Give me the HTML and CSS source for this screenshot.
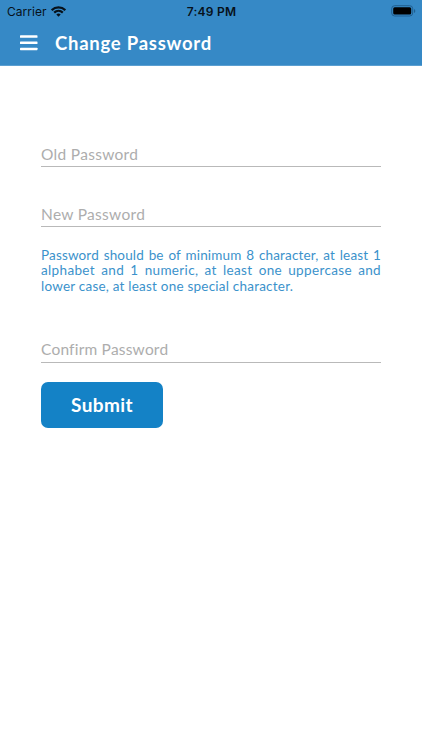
FILE: index.html
```
<!DOCTYPE html>
<html lang="en">
<head>
<meta charset="utf-8">
<title>Change Password</title>
<link rel="stylesheet" href="styles.css">
</head>
<body>
<header class="header">
  <div class="status">
    <div class="carrier"><span class="carrier-name">Carrier</span>
      <svg class="wifi" width="15" height="11" viewBox="0 0 15 11" fill="none" stroke="#07111a" stroke-width="2.200"><path d="M.7 4.1C4.5.4 10.500.4 14.300 4.100M3.200 6.600C5.700 4.200 9.300 4.200 11.800 6.600"/><path d="M5.300 8.400Q7.500 6.600 9.700 8.400L7.500 10.700Z" fill="#07111a" stroke="none"/></svg>
    </div>
    <time class="time">7:49 PM</time>
    <svg class="battery" width="25" height="12" viewBox="0 0 25 12"><rect x=".7" y=".7" width="21" height="10.300" rx="3" fill="none" stroke="#205f91"/><rect x="2.200" y="2.200" width="18" height="7.300" rx="1.500" fill="#000"/><path d="M23 4v4q1.300-.6 1.300-2T23 4" fill="#205f91"/></svg>
  </div>
  <div class="toolbar">
    <svg class="menu" width="18" height="16" viewBox="0 0 18 16" fill="#fff"><rect y=".3" width="17.500" height="2.500" rx=".6"/><rect y="6.500" width="17.500" height="2.500" rx=".6"/><rect y="12.700" width="17.500" height="2.500" rx=".6"/></svg>
    <h1 class="title">Change Password</h1>
  </div>
</header>
<main class="form">
  <div class="field old"><span>Old Password</span></div>
  <div class="field new"><span>New Password</span></div>
  <div class="hint">
    <p class="line">Password should be of minimum 8 character, at least 1</p>
    <p class="line wide">alphabet and 1 numeric, at least one uppercase and</p>
    <p class="line last"><span>lower case, at least one special character.</span></p>
  </div>
  <div class="field confirm"><span>Confirm Password</span></div>
  <button class="submit">Submit</button>
</main>
</body>
</html>
```
FILE: styles.css
```
* { box-sizing: border-box; }
body { margin: 0; background: #fff; font-family: Lato, sans-serif; }
.header { height: 66px; background: #3689c6; border-bottom: 1px solid #5b9fd1; }
.status {
  height: 22px;
  display: grid;
  grid-template-columns: 1fr auto 1fr;
  padding: 0 6px 0 7px;
  align-items: center;
  color: #07111a;
  font-family: Inter, sans-serif;
}
.carrier { display: flex; align-items: center; gap: 4px; font-size: 12px; letter-spacing: .05px; }
.time { font-size: 12px; font-weight: 600; letter-spacing: .25px; }
.battery { justify-self: end; }
.toolbar { height: 42px; display: flex; align-items: center; padding-left: 20px; gap: 17px; }
.title { margin: 0; color: #fff; font-size: 18.500px; line-height: 22px; font-weight: 700; letter-spacing: .75px; }
.form { padding: 76px 41px 0; }
.field {
  height: 26px;
  border-bottom: 1px solid #b9b9b9;
  color: #adadad;
  font-size: 15.500px;
  font-weight: 400;
  line-height: 24px;
  letter-spacing: .3px;
}
.old { height: 25px; }
.new { margin-top: 34px; line-height: 26px; }
.hint { margin-top: 20.500px; color: #3b92cb; font-size: 13.500px; line-height: 15.500px; }
.line { margin: 0; text-align: justify; text-align-last: justify; white-space: nowrap; letter-spacing: .15px; }
.line.wide { letter-spacing: .35px; }
.line.last { text-align-last: left; letter-spacing: .22px; }
.confirm { margin-top: 42.500px; line-height: 25px; letter-spacing: .2px; }
.submit {
  display: block;
  width: 122px;
  height: 46px;
  margin-top: 19px;
  padding: 0;
  border: 0;
  border-radius: 7px;
  background: #1482c6;
  color: #fff;
  font: 700 19px Lato, sans-serif;
  letter-spacing: .4px;
}
```
